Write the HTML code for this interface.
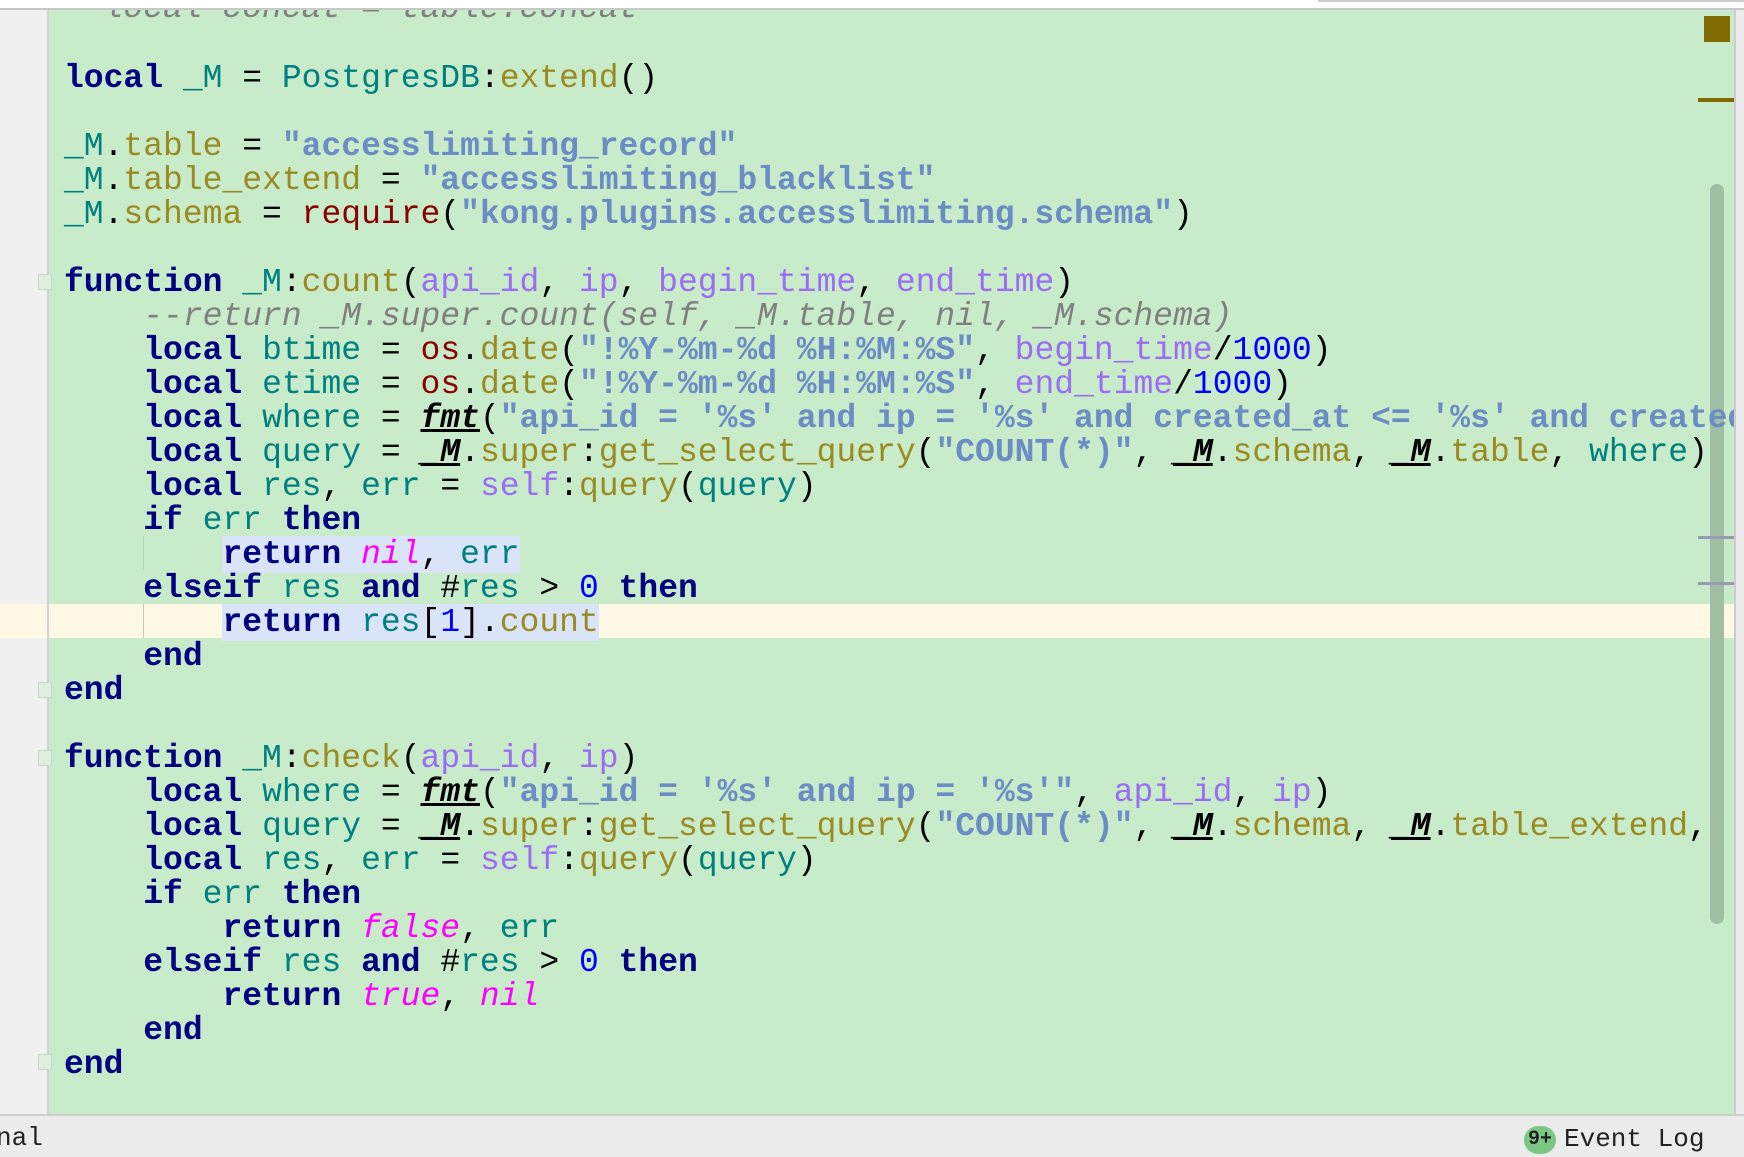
<!DOCTYPE html>
<html><head><meta charset="utf-8"><style>
html,body{margin:0;padding:0;width:1744px;height:1150px;overflow:hidden;background:#ececec;font-family:"Liberation Mono",monospace;}
#top{position:absolute;left:0;top:0;width:1744px;height:8px;background:#fff;border-bottom:2px solid #c8c8c8;}
#gut{position:absolute;left:0;top:10px;width:47px;height:1104px;background:#f0f0f0;border-right:2px solid #d2d2d2;}
#ed{position:absolute;left:49px;top:10px;width:1685px;height:1104px;background:#c8ecca;overflow:hidden;}
.cur{position:absolute;left:0;top:604px;width:1734px;height:34px;background:#fef8e4;}
.code{position:absolute;left:0;top:2px;}
.l{position:absolute;left:64px;height:34px;line-height:34px;font-size:33px;white-space:pre;color:#000;}
.k{color:#000080;font-weight:bold}
.v{color:#008080}
.f{color:#9b8a22}
.s{color:#6b8cc4;font-weight:bold}
.p{color:#9c6cf5}
.n{color:#0000ff}
.c{color:#808080;font-style:italic}
.b{color:#8b0000}
.m{color:#ff00ff;font-style:italic}
.u{font-weight:bold;font-style:italic;text-decoration:underline}
.sel{background:#d9e4f9}
.guide{position:absolute;left:143px;width:1px;height:34px;background:#b8d0b8}
.fold{position:absolute;left:38px;width:12px;height:14px;border:1px solid #c8d8c8;background:#e0eee0}
#status{position:absolute;left:0;top:1114px;width:1744px;height:36px;background:#ececec;border-top:2px solid #cfcfcf;font-size:26px;line-height:36px;color:#222}
</style></head><body>
<div id="gut"></div>
<div id="ed"></div>
<div class="cur"></div>
<div style="position:absolute;left:0;top:604px;width:47px;height:34px;background:#fef8e4"></div>
<div style="position:absolute;left:47px;top:10px;width:2px;height:1104px;background:#d2d2d2"></div>
<div style="position:absolute;left:1704px;top:16px;width:26px;height:26px;background:#806b00"></div>
<div style="position:absolute;left:1698px;top:98px;width:36px;height:4px;background:#806b00"></div>
<div style="position:absolute;left:1710px;top:184px;width:14px;height:740px;border-radius:7px;background:#9fbea3"></div>
<div style="position:absolute;left:1698px;top:536px;width:36px;height:3px;background:#9a9ab0"></div>
<div style="position:absolute;left:1698px;top:582px;width:36px;height:3px;background:#9a9ab0"></div>
<div class="fold" style="top:274px"></div>
<div class="fold" style="top:682px"></div>
<div class="fold" style="top:750px"></div>
<div class="fold" style="top:1054px"></div>
<div class="guide" style="top:536px"></div>
<div class="guide" style="top:604px"></div>
<div class="code">
<div class="l c" style="top:-10px">--local concat = table.concat</div>
<div class="l" style="top:60px"><span class="k">local</span> <span class="v">_M</span> = <span class="v">PostgresDB</span>:<span class="f">extend</span>()</div>
<div class="l" style="top:128px"><span class="v">_M</span>.<span class="f">table</span> = <span class="s">"accesslimiting_record"</span></div>
<div class="l" style="top:162px"><span class="v">_M</span>.<span class="f">table_extend</span> = <span class="s">"accesslimiting_blacklist"</span></div>
<div class="l" style="top:196px"><span class="v">_M</span>.<span class="f">schema</span> = <span class="b">require</span>(<span class="s">"kong.plugins.accesslimiting.schema"</span>)</div>
<div class="l" style="top:264px"><span class="k">function</span> <span class="v">_M</span>:<span class="f">count</span>(<span class="p">api_id</span>, <span class="p">ip</span>, <span class="p">begin_time</span>, <span class="p">end_time</span>)</div>
<div class="l" style="top:298px">    <span class="c">--return _M.super.count(self, _M.table, nil, _M.schema)</span></div>
<div class="l" style="top:332px">    <span class="k">local</span> <span class="v">btime</span> = <span class="b">os</span>.<span class="f">date</span>(<span class="s">"!%Y-%m-%d %H:%M:%S"</span>, <span class="p">begin_time</span>/<span class="n">1000</span>)</div>
<div class="l" style="top:366px">    <span class="k">local</span> <span class="v">etime</span> = <span class="b">os</span>.<span class="f">date</span>(<span class="s">"!%Y-%m-%d %H:%M:%S"</span>, <span class="p">end_time</span>/<span class="n">1000</span>)</div>
<div class="l" style="top:400px">    <span class="k">local</span> <span class="v">where</span> = <span class="u">fmt</span>(<span class="s">"api_id = '%s' and ip = '%s' and created_at &lt;= '%s' and created_at</span></div>
<div class="l" style="top:434px">    <span class="k">local</span> <span class="v">query</span> = <span class="u">_M</span>.<span class="f">super</span>:<span class="f">get_select_query</span>(<span class="s">"COUNT(*)"</span>, <span class="u">_M</span>.<span class="f">schema</span>, <span class="u">_M</span>.<span class="f">table</span>, <span class="v">where</span>)</div>
<div class="l" style="top:468px">    <span class="k">local</span> <span class="v">res</span>, <span class="v">err</span> = <span class="p">self</span>:<span class="f">query</span>(<span class="v">query</span>)</div>
<div class="l" style="top:502px">    <span class="k">if</span> <span class="v">err</span> <span class="k">then</span></div>
<div class="l" style="top:536px">        <span class="sel"><span class="k">return</span> <span class="m">nil</span>, <span class="v">err</span></span></div>
<div class="l" style="top:570px">    <span class="k">elseif</span> <span class="v">res</span> <span class="k">and</span> #<span class="v">res</span> &gt; <span class="n">0</span> <span class="k">then</span></div>
<div class="l" style="top:604px">        <span class="sel"><span class="k">return</span> <span class="v">res</span>[<span class="n">1</span>].<span class="f">count</span></span></div>
<div class="l" style="top:638px">    <span class="k">end</span></div>
<div class="l" style="top:672px"><span class="k">end</span></div>
<div class="l" style="top:740px"><span class="k">function</span> <span class="v">_M</span>:<span class="f">check</span>(<span class="p">api_id</span>, <span class="p">ip</span>)</div>
<div class="l" style="top:774px">    <span class="k">local</span> <span class="v">where</span> = <span class="u">fmt</span>(<span class="s">"api_id = '%s' and ip = '%s'"</span>, <span class="p">api_id</span>, <span class="p">ip</span>)</div>
<div class="l" style="top:808px">    <span class="k">local</span> <span class="v">query</span> = <span class="u">_M</span>.<span class="f">super</span>:<span class="f">get_select_query</span>(<span class="s">"COUNT(*)"</span>, <span class="u">_M</span>.<span class="f">schema</span>, <span class="u">_M</span>.<span class="f">table_extend</span>,</div>
<div class="l" style="top:842px">    <span class="k">local</span> <span class="v">res</span>, <span class="v">err</span> = <span class="p">self</span>:<span class="f">query</span>(<span class="v">query</span>)</div>
<div class="l" style="top:876px">    <span class="k">if</span> <span class="v">err</span> <span class="k">then</span></div>
<div class="l" style="top:910px">        <span class="k">return</span> <span class="m">false</span>, <span class="v">err</span></div>
<div class="l" style="top:944px">    <span class="k">elseif</span> <span class="v">res</span> <span class="k">and</span> #<span class="v">res</span> &gt; <span class="n">0</span> <span class="k">then</span></div>
<div class="l" style="top:978px">        <span class="k">return</span> <span class="m">true</span>, <span class="m">nil</span></div>
<div class="l" style="top:1012px">    <span class="k">end</span></div>
<div class="l" style="top:1046px"><span class="k">end</span></div>
</div>
<div id="top"></div>
<div style="position:absolute;left:1318px;top:0;width:426px;height:2px;background:#ccc"></div>
<div style="position:absolute;left:1734px;top:10px;width:10px;height:1104px;background:#ececec;border-left:2px solid #ccc"></div>
<div id="status">
<span style="position:absolute;left:-4px;top:4px">nal</span>
<span style="position:absolute;left:1524px;top:10px;width:32px;height:28px;border-radius:14px;background:#7dc784;font-size:20px;font-weight:bold;line-height:28px;text-align:center;color:#222">9+</span>
<span style="position:absolute;left:1564px;top:5px">Event Log</span>
</div>
</body></html>
